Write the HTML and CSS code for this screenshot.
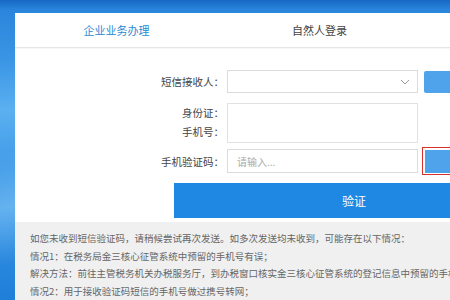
FILE: index.html
```html
<!DOCTYPE html>
<html lang="zh">
<head>
<meta charset="utf-8">
<link rel="stylesheet" href="styles.css">
</head>
<body>
<div class="panel">
  <div class="tabs">
    <div class="tab active">企业业务办理</div>
    <div class="tab">自然人登录</div>
  </div>
  <div class="form">
    <div class="row row-select">
      <div class="label">短信接收人：</div>
      <div class="select"><svg class="chev" width="10" height="6" viewBox="0 0 10 6"><path d="M1 1 L5 5 L9 1" fill="none" stroke="#999" stroke-width="1"/></svg></div>
      <div class="btn-side"></div>
    </div>
    <div class="row row-info">
      <div class="label label-multi"><span>身份证：</span><span>手机号：</span></div>
      <div class="infobox"></div>
    </div>
    <div class="row row-code">
      <div class="label">手机验证码：</div>
      <div class="input">请输入...</div>
      <div class="btn-red"><div class="btn-red-inner"></div></div>
    </div>
    <div class="verify">验证</div>
  </div>
  <div class="notes">
    <p>如您未收到短信验证码，请稍候尝试再次发送。如多次发送均未收到，可能存在以下情况：</p>
    <p>情况1：在税务局金三核心征管系统中预留的手机号有误；</p>
    <p>解决方法：前往主管税务机关办税服务厅，到办税窗口核实金三核心征管系统的登记信息中预留的手机号</p>
    <p>情况2：用于接收验证码短信的手机号做过携号转网；</p>
  </div>
</div>
</body>
</html>
```

FILE: styles.css
```css
html, body {
  margin: 0;
  padding: 0;
}
body {
  width: 450px;
  height: 300px;
  overflow: hidden;
  font-family: "Noto Sans CJK SC", "Liberation Sans", sans-serif;
  background:
    linear-gradient(170deg, rgba(255,255,255,0) 0%, rgba(140,200,250,0.0) 40%, rgba(140,205,250,0.55) 55%, rgba(140,200,250,0) 70%),
    linear-gradient(180deg, #1668c4 0px, #2a86dc 10px, #3a95e4 60px, #5bb0f0 110px, #3d98e6 170px, #1f7fd9 300px);
  padding-top: 13px;
  box-sizing: border-box;
}
.panel {
  margin-left: 15px;
  height: 287px;
  background: #fff;
  display: flex;
  flex-direction: column;
  overflow: hidden;
}
.tabs {
  display: flex;
  height: 34px;
  flex: none;
  border-bottom: 1px solid #e6e6e6;
  box-shadow: 0 1px 1px rgba(0,0,0,0.03);
}
.tab {
  width: 203px;
  flex: none;
  display: flex;
  align-items: center;
  justify-content: center;
  font-size: 11px;
  color: #444;
}
.tab.active {
  color: #2a8bd4;
}
.form {
  padding-top: 22px;
  display: flex;
  flex-direction: column;
  flex: none;
}
.row {
  display: flex;
  align-items: center;
}
.row > * {
  flex: none;
}
.label {
  width: 209px;
  text-align: right;
  font-size: 10.5px;
  color: #444;
}
.label-multi {
  display: flex;
  flex-direction: column;
  align-items: flex-end;
  line-height: 19px;
  margin-top: -3px;
}
.select {
  margin-left: 3px;
  width: 191px;
  height: 23px;
  border: 1px solid #dcdcdc;
  box-sizing: border-box;
  display: flex;
  align-items: center;
  justify-content: flex-end;
  padding-right: 7px;
}
.btn-side {
  margin-left: 6px;
  width: 40px;
  height: 22px;
  background: #4ea3ea;
  border-radius: 2px;
}
.row-info {
  margin-top: 10px;
}
.infobox {
  margin-left: 3px;
  width: 191px;
  height: 40px;
  border: 1px solid #e2e2e2;
  box-sizing: border-box;
}
.row-code {
  margin-top: 4px;
}
.input {
  margin-left: 3px;
  width: 191px;
  height: 24px;
  border: 1px solid #dcdcdc;
  box-sizing: border-box;
  font-size: 10px;
  color: #aaa;
  display: flex;
  align-items: center;
  padding-left: 9px;
}
.btn-red {
  margin-left: 4px;
  width: 40px;
  height: 28px;
  border: 1.5px solid #d9302c;
  box-sizing: border-box;
  padding: 1.5px;
  background: #fff;
}
.btn-red-inner {
  width: 100%;
  height: 100%;
  background: #4ea3ea;
}
.verify {
  margin-top: 8px;
  margin-left: 159px;
  width: 360px;
  height: 35px;
  flex: none;
  background: #1e88e2;
  color: #fff;
  font-size: 12px;
  display: flex;
  align-items: center;
  justify-content: center;
}
.notes {
  margin-top: 4px;
  flex: 1;
  background: #f0f0f0;
  padding: 8px 0 0 15px;
  font-size: 9.5px;
  color: #666;
}
.notes p {
  margin: 0;
  line-height: 17.5px;
  white-space: nowrap;
  overflow: hidden;
}
```
